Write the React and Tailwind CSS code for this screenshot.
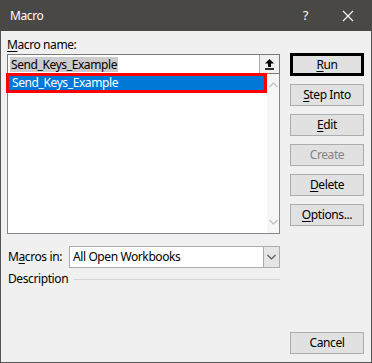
import React from "react";

const font = { fontFamily: '"Segoe UI", "Noto Sans", "Liberation Sans", sans-serif' };

function Btn({ children, className = "", disabled = false }) {
  return (
    <div
      className={`flex h-[22px] w-[74px] items-center justify-center border border-[#adadad] bg-[#e1e1e1] text-[12px] ${
        disabled ? "text-[#838383]" : "text-black"
      } ${className}`}
    >
      {children}
    </div>
  );
}

function U({ children }) {
  return <span className="underline underline-offset-2">{children}</span>;
}

export default function App() {
  return (
    <div className="h-[363px] w-[372px] overflow-hidden bg-[#f0f0f0] tracking-[-0.4px]" style={font}>
      {/* title bar */}
      <div className="flex h-[31px] items-center bg-[#4a4845] pl-[10px] text-white">
        <span className="text-[12px]">Macro</span>
        <span className="ml-auto mr-[34px] text-[13px]">?</span>
        <svg width="12" height="12" viewBox="0 0 12 12" className="mr-[18px]">
          <path d="M1 1L11 11M11 1L1 11" stroke="#fff" strokeWidth="1.1" />
        </svg>
      </div>

      <div className="flex h-[332px] border-x border-b border-[#555] pl-[6px] pr-[7px]">
        {/* left column */}
        <div className="flex w-[273px] flex-col pt-[6px]">
          <div className="h-[17px] text-[12px] leading-[16px] text-black">
            <U>M</U>acro name:
          </div>
          <div className="flex h-[20px] items-center border border-[#7a7a7a] bg-white pl-[2px]">
            <span className="bg-[#cccccc] px-[1px] text-[12px] leading-[15px] text-black">
              Send_Keys_Example
            </span>
            <div className="ml-auto flex h-[18px] w-[20px] items-center justify-center border-l border-[#adadad] bg-[#f0f0f0]">
              <svg width="11" height="12" viewBox="0 0 11 12">
                <path d="M5.5 1L1 5.5H4V9H7V5.5H10Z" fill="#000" />
                <rect x="1" y="10.2" width="9" height="1.6" fill="#000" />
              </svg>
            </div>
          </div>
          <div className="flex h-[160px] border-x border-b border-[#828790] bg-white">
            <div className="flex-1">
              <div className="-ml-[2px] -mt-[1px] flex h-[20px] w-[261px] items-center border-[3px] border-[#ff0000] bg-[#0078d7] pl-[3px] text-[12px] text-white">
                Send_Keys_Example
              </div>
            </div>
            <div className="flex w-[15px] flex-col items-center justify-between bg-[#f7f7f7] py-[8px]">
              <svg width="9" height="6" viewBox="0 0 9 6">
                <path d="M0.5 5L4.5 1L8.5 5" stroke="#c4c4c4" strokeWidth="1.3" fill="none" />
              </svg>
              <svg width="9" height="6" viewBox="0 0 9 6">
                <path d="M0.5 1L4.5 5L8.5 1" stroke="#c4c4c4" strokeWidth="1.3" fill="none" />
              </svg>
            </div>
          </div>

          <div className="mt-[12px] flex h-[22px] items-center">
            <span className="w-[62px] pl-[1px] text-[12px] text-black">
              M<U>a</U>cros in:
            </span>
            <div className="flex h-[22px] flex-1 items-center border border-[#adadad] bg-white">
              <span className="pl-[3px] text-[12px] text-black">All Open Workbooks</span>
              <div className="ml-auto flex h-[20px] w-[16px] items-center justify-center border-l border-[#adadad] bg-[#e5e5e5]">
                <svg width="9" height="6" viewBox="0 0 9 6">
                  <path d="M0.5 1L4.5 5L8.5 1" stroke="#555" strokeWidth="1.1" fill="none" />
                </svg>
              </div>
            </div>
          </div>

          <div className="mt-[2px] flex h-[18px] items-center">
            <span className="pl-[1px] text-[12px] text-black">Description</span>
            <div className="ml-[6px] h-px flex-1 bg-[#d5d5d5]" />
          </div>
        </div>

        {/* right column */}
        <div className="ml-[10px] flex flex-col gap-[8px] pb-[8px] pt-[22px]">
          <Btn className="!h-[23px] !border-[3px] !border-black">
            <U>R</U>un
          </Btn>
          <Btn>
            <U>S</U>tep Into
          </Btn>
          <Btn>
            <U>E</U>dit
          </Btn>
          <Btn disabled>Create</Btn>
          <Btn>
            <U>D</U>elete
          </Btn>
          <Btn>
            <U>O</U>ptions...
          </Btn>
          <Btn className="mt-auto">Cancel</Btn>
        </div>
      </div>
    </div>
  );
}
